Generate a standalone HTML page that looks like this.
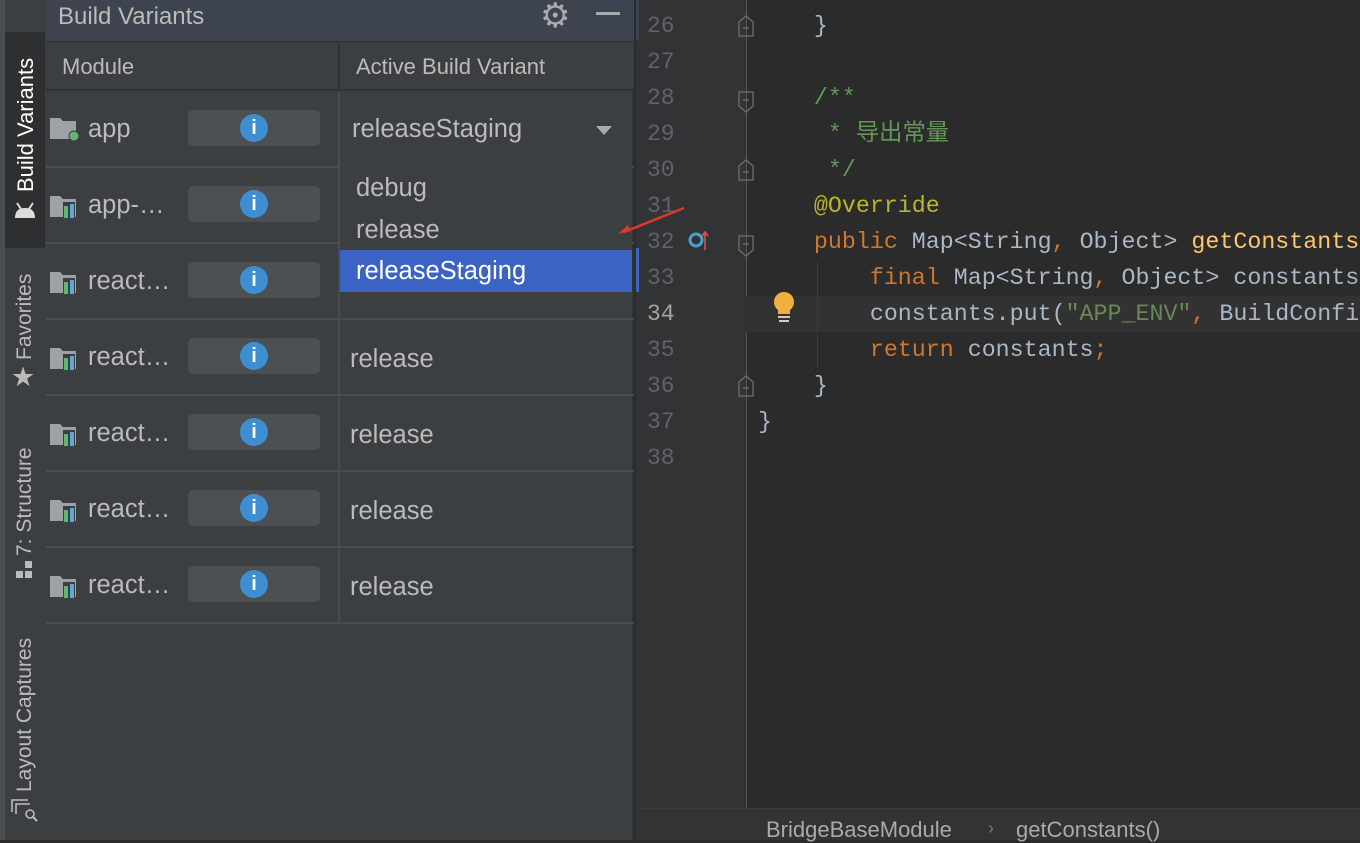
<!DOCTYPE html>
<html><head><meta charset="utf-8"><style>
*{margin:0;padding:0;box-sizing:border-box}
body{width:1360px;height:840px;overflow:hidden;background:#2b2b2b;position:relative;font-family:"Liberation Sans",sans-serif}
.a{position:absolute}
.ui{font-family:"Liberation Sans","Noto Sans CJK SC",sans-serif;color:#bbbbbb}
.vt{position:absolute;transform:rotate(-90deg);transform-origin:left top;white-space:nowrap;font-size:21px;color:#bbb}
.row{position:absolute;left:46px;width:588px;height:76px;border-bottom:2px solid #4a4d4f}
.row .name{position:absolute;left:42px;top:23px;font-size:25.5px;color:#bbb}
.row .btn{position:absolute;left:142px;top:18px;width:132px;height:36px;background:#4c5052;border-radius:5px}
.row .btn i{position:absolute;left:52px;top:4px;width:28px;height:28px;border-radius:50%;background:#3d8fd1;color:#fff;font-style:normal;font-weight:bold;font-size:20px;text-align:center;line-height:28px;font-family:"Liberation Sans",sans-serif}
.row .var{position:absolute;left:304px;top:25px;font-size:25.5px;color:#bbb}
.row .sep{position:absolute;left:292px;top:0;width:2px;height:76px;background:#4a4d4f}
.code{position:absolute;font-family:"Liberation Mono","Noto Sans CJK SC",monospace;font-size:23.3px;white-space:pre;color:#a9b7c6;line-height:36px}
.ln{position:absolute;left:647px;font-family:"Liberation Mono",monospace;font-size:23px;color:#606366;line-height:36px}
.k{color:#cc7832}.c{color:#629755}.an{color:#bbb529}.f{color:#ffc66d}.s{color:#6a8759}
</style></head><body>
<div class="a" style="left:0;top:0;width:5px;height:840px;background:#4b4e50"></div>
<div class="a" style="left:5px;top:0;width:41px;height:840px;background:#3c3f41"></div>
<div class="a" style="left:5px;top:32px;width:40px;height:216px;background:#2d2f30"></div>
<div class="vt" style="left:13px;top:192px;color:#fff;font-size:22px">Build Variants</div>
<svg class="a" style="left:14px;top:199px" width="22" height="20"><path d="M1 19 Q1 9 11 9 Q21 9 21 19 Z" fill="#ddd"/><path d="M3 4 L7 10 M19 4 L15 10" stroke="#ddd" stroke-width="2"/></svg>
<div class="vt" style="left:13px;top:360px">Favorites</div>
<div class="a" style="left:11px;top:362px;font-size:27px;color:#bbb">★</div>
<div class="vt" style="left:13px;top:556px">7: Structure</div>
<svg class="a" style="left:15px;top:560px" width="22" height="22"><rect x="10" y="1" width="7" height="7" fill="#bbb"/><rect x="1" y="11" width="7" height="7" fill="#bbb"/><rect x="10" y="11" width="7" height="7" fill="#bbb"/></svg>
<div class="vt" style="left:13px;top:792px">Layout Captures</div>
<svg class="a" style="left:10px;top:798px" width="30" height="28"><path d="M2 14V2h16M6 16V6h14" fill="none" stroke="#bbb" stroke-width="1.6"/><circle cx="20" cy="16" r="4" fill="none" stroke="#bbb" stroke-width="1.6"/><path d="M23 19l4 4" stroke="#bbb" stroke-width="2"/></svg>
<div class="a" style="left:46px;top:0;width:588px;height:840px;background:#3c3f41;border-right:2px solid #323232"></div>
<div class="a" style="left:46px;top:0;width:588px;height:41px;background:#3d4450"></div>
<div class="a ui" style="left:58px;top:3px;font-size:24px;color:#bbb">Build Variants</div>
<div class="a" style="left:540px;top:-4px;font-size:34px;color:#aaa">⚙</div>
<div class="a" style="left:596px;top:12px;width:24px;height:3px;background:#aaa"></div>
<div class="a" style="left:46px;top:41px;width:588px;height:50px;background:#3c3f41;border-top:1px solid #323232;border-bottom:2px solid #2f3133"></div>
<div class="a" style="left:338px;top:43px;width:2px;height:46px;background:#2f3133"></div>
<div class="a ui" style="left:62px;top:54px;font-size:22px">Module</div>
<div class="a ui" style="left:356px;top:54px;font-size:22px">Active Build Variant</div>

<div class="row" style="top:92px"><svg class="a" style="left:4px;top:24px" width="30" height="26"><path d="M0 2h10l3 3h13v18H0z" fill="#9ea2a6"/><circle cx="24" cy="20" r="5" fill="#5fb870" stroke="#3c3f41" stroke-width="1"/></svg><div class="name">app</div><div class="btn"><i>i</i></div><div class="sep"></div><div class="a ui" style="left:306px;top:23px;font-size:25.5px">releaseStaging</div><div class="a" style="left:550px;top:34px;border:8px solid transparent;border-top:9px solid #aaa;border-bottom:0"></div></div>
<div class="row" style="top:168px"><svg class="a" style="left:4px;top:26px" width="30" height="26"><path d="M0 2h10l3 3h13v18H0z" fill="#9ea2a6"/><rect x="13" y="8" width="12" height="16" fill="#3c3f41"/><rect x="14" y="12" width="4" height="12" fill="#5fb870"/><rect x="20" y="10" width="4" height="14" fill="#5fa8d6"/></svg><div class="name">app-…</div><div class="btn"><i>i</i></div><div class="sep"></div></div>
<div class="row" style="top:244px"><svg class="a" style="left:4px;top:26px" width="30" height="26"><path d="M0 2h10l3 3h13v18H0z" fill="#9ea2a6"/><rect x="13" y="8" width="12" height="16" fill="#3c3f41"/><rect x="14" y="12" width="4" height="12" fill="#5fb870"/><rect x="20" y="10" width="4" height="14" fill="#5fa8d6"/></svg><div class="name">react…</div><div class="btn"><i>i</i></div><div class="sep"></div></div>
<div class="row" style="top:320px"><svg class="a" style="left:4px;top:26px" width="30" height="26"><path d="M0 2h10l3 3h13v18H0z" fill="#9ea2a6"/><rect x="13" y="8" width="12" height="16" fill="#3c3f41"/><rect x="14" y="12" width="4" height="12" fill="#5fb870"/><rect x="20" y="10" width="4" height="14" fill="#5fa8d6"/></svg><div class="name">react…</div><div class="btn"><i>i</i></div><div class="sep"></div><div class="var">release</div></div>
<div class="row" style="top:396px"><svg class="a" style="left:4px;top:26px" width="30" height="26"><path d="M0 2h10l3 3h13v18H0z" fill="#9ea2a6"/><rect x="13" y="8" width="12" height="16" fill="#3c3f41"/><rect x="14" y="12" width="4" height="12" fill="#5fb870"/><rect x="20" y="10" width="4" height="14" fill="#5fa8d6"/></svg><div class="name">react…</div><div class="btn"><i>i</i></div><div class="sep"></div><div class="var">release</div></div>
<div class="row" style="top:472px"><svg class="a" style="left:4px;top:26px" width="30" height="26"><path d="M0 2h10l3 3h13v18H0z" fill="#9ea2a6"/><rect x="13" y="8" width="12" height="16" fill="#3c3f41"/><rect x="14" y="12" width="4" height="12" fill="#5fb870"/><rect x="20" y="10" width="4" height="14" fill="#5fa8d6"/></svg><div class="name">react…</div><div class="btn"><i>i</i></div><div class="sep"></div><div class="var">release</div></div>
<div class="row" style="top:548px"><svg class="a" style="left:4px;top:26px" width="30" height="26"><path d="M0 2h10l3 3h13v18H0z" fill="#9ea2a6"/><rect x="13" y="8" width="12" height="16" fill="#3c3f41"/><rect x="14" y="12" width="4" height="12" fill="#5fb870"/><rect x="20" y="10" width="4" height="14" fill="#5fa8d6"/></svg><div class="name">react…</div><div class="btn"><i>i</i></div><div class="sep"></div><div class="var">release</div></div>

<div class="a" style="left:340px;top:166px;width:292px;height:126px;background:#3c3f41"></div>
<div class="a ui" style="left:356px;top:174px;font-size:25.5px">debug</div>
<div class="a ui" style="left:356px;top:216px;font-size:25.5px">release</div>
<div class="a" style="left:340px;top:250px;width:292px;height:42px;background:#3b63c4"></div>
<div class="a ui" style="left:356px;top:257px;font-size:25.5px;color:#fff">releaseStaging</div>

<div class="a" style="left:636px;top:0;width:110px;height:808px;background:#313335"></div>
<div class="a" style="left:746px;top:0;width:1px;height:808px;background:#555"></div>
<div class="a" style="left:636px;top:0;width:3px;height:40px;background:#3d4450"></div>
<div class="a" style="left:636px;top:248px;width:3px;height:44px;background:#3b63c4"></div>
<div class="a" style="left:746px;top:296px;width:614px;height:36px;background:#323232"></div>
<div class="a" style="left:817px;top:262px;width:1px;height:106px;background:#3b3b3b"></div>
<div class="ln" style="top:8px">26<br>27<br>28<br>29<br>30<br>31<br>32<br>33<br><span style="color:#a4a3a3">34</span><br>35<br>36<br>37<br>38</div>
<svg class="a" style="left:736px;top:0" width="20" height="400" fill="none" stroke="#666" stroke-width="1.5">
<path d="M3 36V22l7-6 7 6v14z"/><path d="M7 28h6"/>
<path d="M3 92v14l7 6 7-6V92z"/><path d="M7 100h6"/>
<path d="M3 180v-14l7-6 7 6v14z"/><path d="M7 172h6"/>
<path d="M3 236v14l7 6 7-6v-14z"/><path d="M7 244h6"/>
<path d="M3 396v-14l7-6 7 6v14z"/><path d="M7 388h6"/>
</svg>
<svg class="a" style="left:686px;top:228px" width="28" height="26"><circle cx="10" cy="12" r="6" fill="none" stroke="#4aa0c9" stroke-width="3"/><path d="M19 22V4M16 8l3-4 3 4" stroke="#d9534f" stroke-width="1.6" fill="none"/></svg>
<svg class="a" style="left:772px;top:290px" width="24" height="34"><path d="M12 2a10 10 0 0 0-6 18v4h12v-4a10 10 0 0 0-6-18z" fill="#f0b03f"/><rect x="6" y="26" width="12" height="2" fill="#ccc"/><rect x="7" y="30" width="10" height="2" fill="#ccc"/></svg>
<svg class="a" style="left:610px;top:200px" width="80" height="40"><path d="M74 8L14 32" stroke="#e0362c" stroke-width="2.5"/><path d="M8 34l10-9 3 6z" fill="#e0362c"/></svg>
<div class="code" style="left:758px;top:8px">    }

    <span class="c">/**</span>
<span class="c">     * 导出常量</span>
<span class="c">     */</span>
    <span class="an">@Override</span>
    <span class="k">public </span>Map&lt;String<span class="k">, </span>Object&gt; <span class="f">getConstants</span>
        <span class="k">final </span>Map&lt;String<span class="k">, </span>Object&gt; constants
        constants.put(<span class="s">"APP_ENV"</span><span class="k">, </span>BuildConfig
        <span class="k">return </span>constants<span class="k">;</span>
    }
}</div>
<div class="a" style="left:636px;top:808px;width:724px;height:32px;background:#313335;border-top:1px solid #3a3a3a"></div>
<div class="a ui" style="left:766px;top:817px;font-size:22px;color:#aaa">BridgeBaseModule</div>
<div class="a ui" style="left:988px;top:818px;font-size:18px;color:#777">›</div>
<div class="a ui" style="left:1016px;top:817px;font-size:22px;color:#aaa">getConstants()</div>
</body></html>
